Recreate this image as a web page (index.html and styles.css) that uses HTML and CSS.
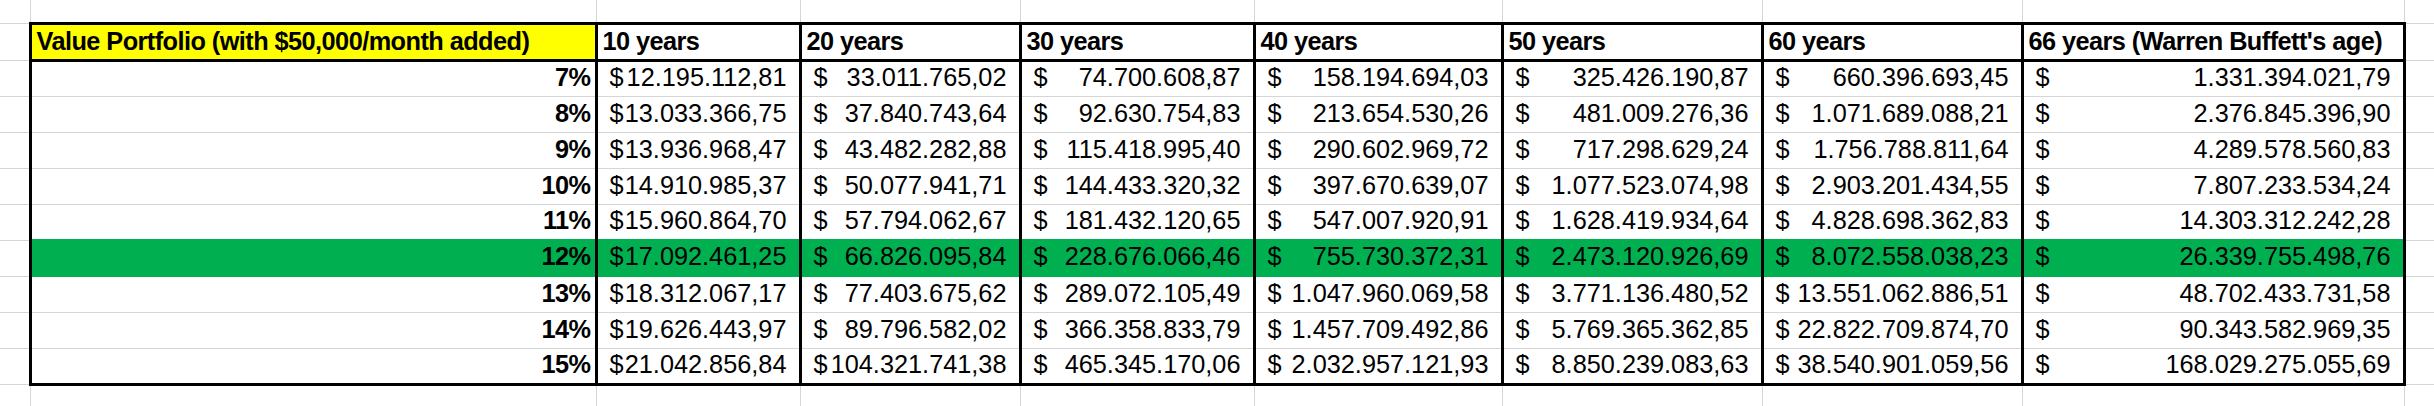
FILE: index.html
```html
<!DOCTYPE html>
<html lang="en">
<head>
<meta charset="utf-8">
<title>Value Portfolio</title>
<link rel="stylesheet" href="styles.css">
</head>
<body>
<table class="sheet">
  <colgroup>
    <col class="w-edge-l">
    <col class="w-a">
    <col class="w-10">
    <col class="w-20">
    <col class="w-30">
    <col class="w-40">
    <col class="w-50">
    <col class="w-60">
    <col class="w-66">
    <col class="w-edge-r">
  </colgroup>
  <tr class="r-top">
    <td class="el"></td><td></td><td></td><td></td><td></td><td></td><td></td><td></td><td></td><td class="er"></td>
  </tr>
  <tr class="r-head">
    <td class="el"></td>
    <th class="hd title">Value Portfolio (with $50,000/month added)</th>
    <th class="hd">10 years</th>
    <th class="hd">20 years</th>
    <th class="hd">30 years</th>
    <th class="hd">40 years</th>
    <th class="hd">50 years</th>
    <th class="hd">60 years</th>
    <th class="hd">66 years (Warren Buffett's age)</th>
    <td class="er"></td>
  </tr>
  <tr class="r-data">
    <td class="el"></td><td class="t pct">7%</td>
    <td class="t"><div class="acct"><span>$</span><span>12.195.112,81</span></div></td>
    <td class="t"><div class="acct"><span>$</span><span>33.011.765,02</span></div></td>
    <td class="t"><div class="acct"><span>$</span><span>74.700.608,87</span></div></td>
    <td class="t"><div class="acct"><span>$</span><span>158.194.694,03</span></div></td>
    <td class="t"><div class="acct"><span>$</span><span>325.426.190,87</span></div></td>
    <td class="t"><div class="acct"><span>$</span><span>660.396.693,45</span></div></td>
    <td class="t"><div class="acct"><span>$</span><span>1.331.394.021,79</span></div></td>
    <td class="er"></td>
  </tr>
  <tr class="r-data">
    <td class="el"></td><td class="t pct">8%</td>
    <td class="t"><div class="acct"><span>$</span><span>13.033.366,75</span></div></td>
    <td class="t"><div class="acct"><span>$</span><span>37.840.743,64</span></div></td>
    <td class="t"><div class="acct"><span>$</span><span>92.630.754,83</span></div></td>
    <td class="t"><div class="acct"><span>$</span><span>213.654.530,26</span></div></td>
    <td class="t"><div class="acct"><span>$</span><span>481.009.276,36</span></div></td>
    <td class="t"><div class="acct"><span>$</span><span>1.071.689.088,21</span></div></td>
    <td class="t"><div class="acct"><span>$</span><span>2.376.845.396,90</span></div></td>
    <td class="er"></td>
  </tr>
  <tr class="r-data">
    <td class="el"></td><td class="t pct">9%</td>
    <td class="t"><div class="acct"><span>$</span><span>13.936.968,47</span></div></td>
    <td class="t"><div class="acct"><span>$</span><span>43.482.282,88</span></div></td>
    <td class="t"><div class="acct"><span>$</span><span>115.418.995,40</span></div></td>
    <td class="t"><div class="acct"><span>$</span><span>290.602.969,72</span></div></td>
    <td class="t"><div class="acct"><span>$</span><span>717.298.629,24</span></div></td>
    <td class="t"><div class="acct"><span>$</span><span>1.756.788.811,64</span></div></td>
    <td class="t"><div class="acct"><span>$</span><span>4.289.578.560,83</span></div></td>
    <td class="er"></td>
  </tr>
  <tr class="r-data">
    <td class="el"></td><td class="t pct">10%</td>
    <td class="t"><div class="acct"><span>$</span><span>14.910.985,37</span></div></td>
    <td class="t"><div class="acct"><span>$</span><span>50.077.941,71</span></div></td>
    <td class="t"><div class="acct"><span>$</span><span>144.433.320,32</span></div></td>
    <td class="t"><div class="acct"><span>$</span><span>397.670.639,07</span></div></td>
    <td class="t"><div class="acct"><span>$</span><span>1.077.523.074,98</span></div></td>
    <td class="t"><div class="acct"><span>$</span><span>2.903.201.434,55</span></div></td>
    <td class="t"><div class="acct"><span>$</span><span>7.807.233.534,24</span></div></td>
    <td class="er"></td>
  </tr>
  <tr class="r-data">
    <td class="el"></td><td class="t pct">11%</td>
    <td class="t"><div class="acct"><span>$</span><span>15.960.864,70</span></div></td>
    <td class="t"><div class="acct"><span>$</span><span>57.794.062,67</span></div></td>
    <td class="t"><div class="acct"><span>$</span><span>181.432.120,65</span></div></td>
    <td class="t"><div class="acct"><span>$</span><span>547.007.920,91</span></div></td>
    <td class="t"><div class="acct"><span>$</span><span>1.628.419.934,64</span></div></td>
    <td class="t"><div class="acct"><span>$</span><span>4.828.698.362,83</span></div></td>
    <td class="t"><div class="acct"><span>$</span><span>14.303.312.242,28</span></div></td>
    <td class="er"></td>
  </tr>
  <tr class="r-data hl">
    <td class="el"></td><td class="t pct">12%</td>
    <td class="t"><div class="acct"><span>$</span><span>17.092.461,25</span></div></td>
    <td class="t"><div class="acct"><span>$</span><span>66.826.095,84</span></div></td>
    <td class="t"><div class="acct"><span>$</span><span>228.676.066,46</span></div></td>
    <td class="t"><div class="acct"><span>$</span><span>755.730.372,31</span></div></td>
    <td class="t"><div class="acct"><span>$</span><span>2.473.120.926,69</span></div></td>
    <td class="t"><div class="acct"><span>$</span><span>8.072.558.038,23</span></div></td>
    <td class="t"><div class="acct"><span>$</span><span>26.339.755.498,76</span></div></td>
    <td class="er"></td>
  </tr>
  <tr class="r-data">
    <td class="el"></td><td class="t pct">13%</td>
    <td class="t"><div class="acct"><span>$</span><span>18.312.067,17</span></div></td>
    <td class="t"><div class="acct"><span>$</span><span>77.403.675,62</span></div></td>
    <td class="t"><div class="acct"><span>$</span><span>289.072.105,49</span></div></td>
    <td class="t"><div class="acct"><span>$</span><span>1.047.960.069,58</span></div></td>
    <td class="t"><div class="acct"><span>$</span><span>3.771.136.480,52</span></div></td>
    <td class="t"><div class="acct"><span>$</span><span>13.551.062.886,51</span></div></td>
    <td class="t"><div class="acct"><span>$</span><span>48.702.433.731,58</span></div></td>
    <td class="er"></td>
  </tr>
  <tr class="r-data">
    <td class="el"></td><td class="t pct">14%</td>
    <td class="t"><div class="acct"><span>$</span><span>19.626.443,97</span></div></td>
    <td class="t"><div class="acct"><span>$</span><span>89.796.582,02</span></div></td>
    <td class="t"><div class="acct"><span>$</span><span>366.358.833,79</span></div></td>
    <td class="t"><div class="acct"><span>$</span><span>1.457.709.492,86</span></div></td>
    <td class="t"><div class="acct"><span>$</span><span>5.769.365.362,85</span></div></td>
    <td class="t"><div class="acct"><span>$</span><span>22.822.709.874,70</span></div></td>
    <td class="t"><div class="acct"><span>$</span><span>90.343.582.969,35</span></div></td>
    <td class="er"></td>
  </tr>
  <tr class="r-data last">
    <td class="el"></td><td class="t pct">15%</td>
    <td class="t"><div class="acct"><span>$</span><span>21.042.856,84</span></div></td>
    <td class="t"><div class="acct"><span>$</span><span>104.321.741,38</span></div></td>
    <td class="t"><div class="acct"><span>$</span><span>465.345.170,06</span></div></td>
    <td class="t"><div class="acct"><span>$</span><span>2.032.957.121,93</span></div></td>
    <td class="t"><div class="acct"><span>$</span><span>8.850.239.083,63</span></div></td>
    <td class="t"><div class="acct"><span>$</span><span>38.540.901.059,56</span></div></td>
    <td class="t"><div class="acct"><span>$</span><span>168.029.275.055,69</span></div></td>
    <td class="er"></td>
  </tr>
  <tr class="r-bottom">
    <td class="el"></td><td></td><td></td><td></td><td></td><td></td><td></td><td></td><td></td><td class="er"></td>
  </tr>
</table>
</body>
</html>
```

FILE: styles.css
```css
html, body {
  margin: 0;
  padding: 0;
  background: #ffffff;
}

body {
  width: 2434px;
  height: 406px;
  overflow: hidden;
  font-family: "Liberation Sans", Arial, sans-serif;
  color: #000000;
}

.sheet {
  border-collapse: collapse;
  table-layout: fixed;
  width: 2434px;
  font-size: 25.3px;
  line-height: 29px;
}

.w-edge-l { width: 30px; }
.w-a { width: 566px; }
.w-10 { width: 204px; }
.w-20 { width: 220px; }
.w-30 { width: 234px; }
.w-40 { width: 248px; }
.w-50 { width: 260px; }
.w-60 { width: 260px; }
.w-66 { width: 382px; }
.w-edge-r { width: 30px; }

.sheet td,
.sheet th {
  border: 1px solid #d6d6d6;
  padding: 0;
  white-space: nowrap;
  overflow: hidden;
  vertical-align: bottom;
}

.sheet .el { border-left-style: hidden; }
.sheet .er { border-right-style: hidden; }
.r-top td { border-top-style: hidden; }
.r-bottom td { border-bottom-style: hidden; }

.r-top { height: 23px; }
.r-head { height: 37px; }
.r-data { height: 36px; }
.r-bottom { height: 22px; }

.sheet .hd {
  border: 3px solid #000000;
  font-weight: bold;
  text-align: left;
  letter-spacing: -0.55px;
  padding: 0 0 3px 5px;
}

.sheet .hd.title {
  background: #ffff00;
}

.sheet .t {
  border-left: 3px solid #000000;
  border-right: 3px solid #000000;
  padding: 0 12px 4px 12px;
}

.sheet .pct {
  font-weight: bold;
  text-align: right;
  letter-spacing: -0.55px;
  padding-right: 4px;
}

.r-data.last .t {
  border-bottom: 3px solid #000000;
}

.r-data.hl .t {
  background: #00b050;
  border-top: 2px solid #00b050;
  border-bottom: 2px solid #00b050;
}

.acct {
  display: flex;
  justify-content: space-between;
}
```
